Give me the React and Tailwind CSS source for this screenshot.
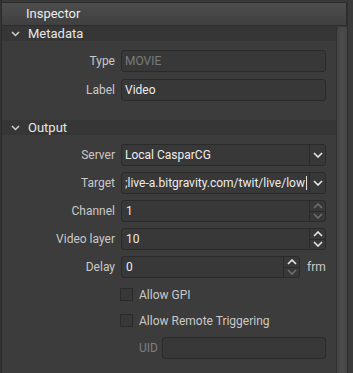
import React from "react";

const font = { fontFamily: 'Roboto, "Liberation Sans", sans-serif' };

const Chevron = ({ up, dim }) => (
  <svg width="10" height="6" viewBox="0 0 10 6" className="block">
    <path
      d={up ? "M1 5 L5 1 L9 5" : "M1 1 L5 5 L9 1"}
      fill="none"
      stroke={dim ? "#6e6e6e" : "#e8e8e8"}
      strokeWidth="1.6"
    />
  </svg>
);

const Section = ({ title }) => (
  <div className="flex items-center h-[15px] bg-[#363636] text-[13px] text-[#e6e6e6]">
    <span className="w-[26px] pl-[9px]">
      <svg width="9" height="6" viewBox="0 0 9 6" className="block">
        <path d="M1 1 L4.5 4.5 L8 1" fill="none" stroke="#cfcfcf" strokeWidth="1.5" />
      </svg>
    </span>
    {title}
  </div>
);

const Label = ({ children }) => (
  <div className="w-[119px] pr-[6px] text-right text-[12px] text-[#c9c9c9]">{children}</div>
);

const Box = ({ children, className = "" }) => (
  <div className={`h-[22px] rounded-[3px] border border-[#2a2a2a] bg-[#383838] flex items-center ${className}`}>
    {children}
  </div>
);

const Combo = ({ value, caret }) => (
  <Box className="w-[205px]">
    <div className="flex-1 min-w-0 pl-[3px] text-[12px] text-[#ececec] overflow-hidden whitespace-nowrap flex items-center">
      {value}
      {caret && <span className="inline-block w-px h-[14px] bg-[#e0e0e0] ml-px" />}
    </div>
    <div className="w-[16px] h-full border-l border-[#2a2a2a] flex items-center justify-center">
      <Chevron />
    </div>
  </Box>
);

const Spin = ({ value, width = "w-[205px]", upDim, downDim }) => (
  <Box className={width}>
    <div className="flex-1 pl-[4px] text-[12px] text-[#ececec]">{value}</div>
    <div className="w-[16px] h-full border-l border-[#2a2a2a] flex flex-col">
      <div className="flex-1 flex items-center justify-center border-b border-[#2a2a2a]">
        <Chevron up dim={upDim} />
      </div>
      <div className="flex-1 flex items-center justify-center">
        <Chevron dim={downDim} />
      </div>
    </div>
  </Box>
);

const Row = ({ children }) => <div className="flex items-center h-[22px]">{children}</div>;

const Check = ({ label }) => (
  <div className="flex items-center h-[13px] pl-[118px] text-[12px] text-[#c9c9c9]">
    <span className="w-[13px] h-[13px] border border-[#2a2a2a] bg-[#383838] mr-[6px]" />
    {label}
  </div>
);

export default function App() {
  return (
    <div className="w-[353px] h-[373px] bg-[#3a3a3a] flex overflow-hidden" style={font}>
      <div className="w-[2px] bg-[#333333] border-r border-[#2b2b2b]" />
      <div className="w-[345px] flex flex-col pt-[2px]">
        <div className="h-[24px] flex items-center pl-[24px] text-[13px] text-[#ececec] bg-gradient-to-b from-[#4d4d4d] to-[#404040] border-t border-r border-b border-[#2c2c2c]">
          Inspector
        </div>
        <div className="flex flex-1">
          <div className="flex-1 flex flex-col bg-[#3c3c3c]">
            <Section title="Metadata" />
            <div className="flex flex-col gap-[7px] pt-[9px] pb-[19px]">
              <Row>
                <Label>Type</Label>
                <Box className="w-[205px]">
                  <span className="pl-[3px] text-[12px] text-[#7a7a7a]">MOVIE</span>
                </Box>
              </Row>
              <Row>
                <Label>Label</Label>
                <Box className="w-[205px]">
                  <span className="pl-[3px] text-[12px] text-[#ececec]">Video</span>
                </Box>
              </Row>
            </div>
            <Section title="Output" />
            <div className="flex flex-col gap-[6px] pt-[9px]">
              <Row>
                <Label>Server</Label>
                <Combo value="Local CasparCG" />
              </Row>
              <Row>
                <Label>Target</Label>
                <Combo value=";live-a.bitgravity.com/twit/live/low" caret />
              </Row>
              <Row>
                <Label>Channel</Label>
                <Spin value="1" upDim downDim />
              </Row>
              <Row>
                <Label>Video layer</Label>
                <Spin value="10" />
              </Row>
              <Row>
                <Label>Delay</Label>
                <Spin value="0" width="w-[179px]" downDim />
                <span className="ml-[7px] text-[12px] text-[#c9c9c9]">frm</span>
              </Row>
            </div>
            <div className="flex flex-col gap-[13px] pt-[10px]">
              <Check label="Allow GPI" />
              <Check label="Allow Remote Triggering" />
            </div>
            <div className="flex items-center h-[22px] mt-[10px] pl-[137px]">
              <span className="w-[23px] text-[12px] text-[#7e7e7e]">UID</span>
              <Box className="w-[164px]" />
            </div>
          </div>
          <div className="w-[11px] mt-[1px] bg-gradient-to-r from-[#434343] via-[#4c4c4c] to-[#454545] border-l border-[#2f2f2f] rounded-t-[3px]" />
        </div>
      </div>
      <div className="flex-1 bg-[#3a3a3a] border-l border-[#2f2f2f]" />
    </div>
  );
}
